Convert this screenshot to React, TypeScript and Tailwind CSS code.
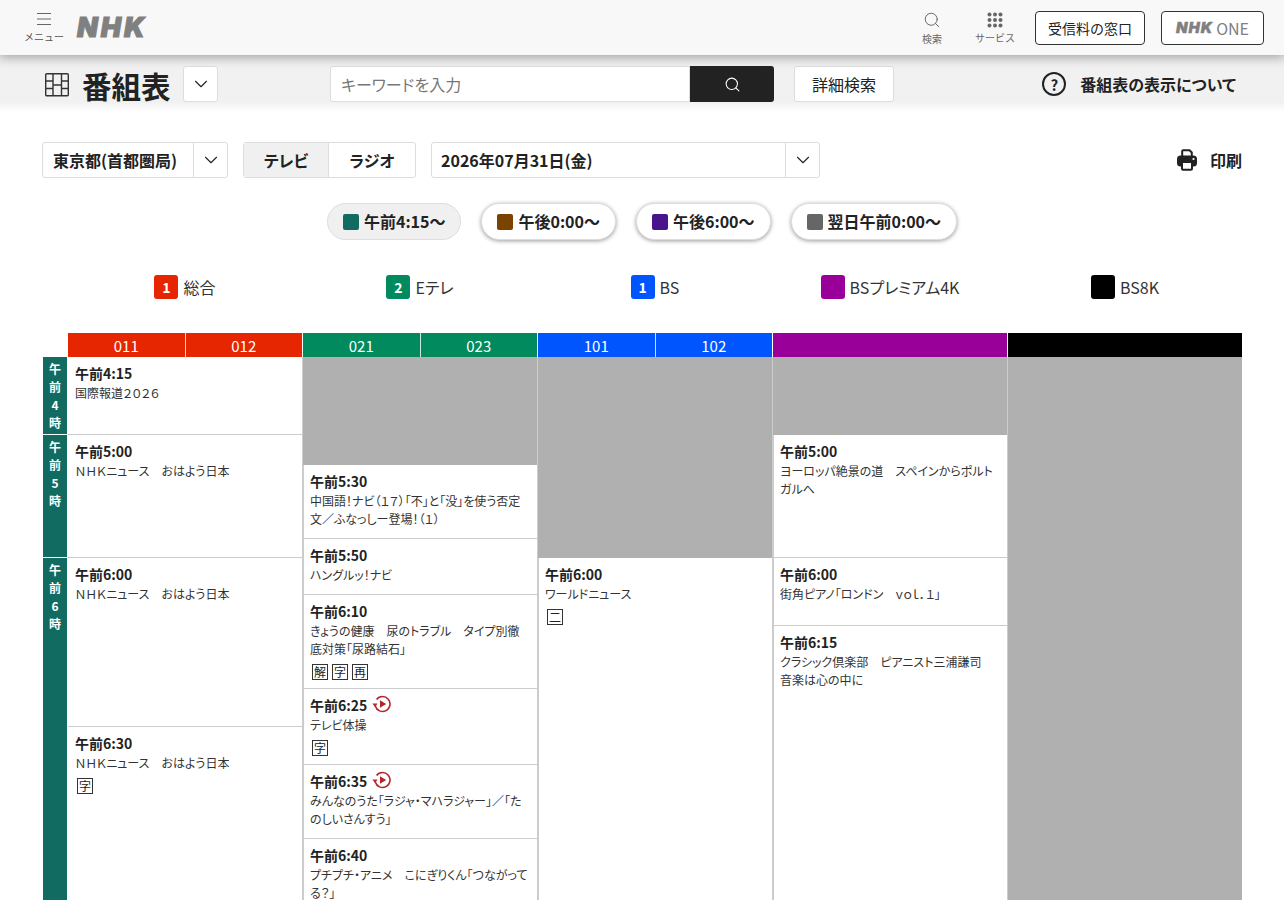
import { ChevronDown, Search } from "lucide-react";
import { ReactNode } from "react";

const FONT = "font-['Noto_Sans_CJK_JP','Noto_Sans',sans-serif]";

type Program = {
  h: string;
  time?: string;
  title?: string;
  badges?: string[];
  replay?: boolean;
};

const columns: Program[][] = [
  [
    { h: "h-[78px]", time: "午前4:15", title: "国際報道２０２６" },
    { h: "h-[123px]", time: "午前5:00", title: "ＮＨＫニュース　おはよう日本" },
    { h: "h-[169px]", time: "午前6:00", title: "ＮＨＫニュース　おはよう日本" },
    { h: "h-[220px]", time: "午前6:30", title: "ＮＨＫニュース　おはよう日本", badges: ["字"] },
  ],
  [
    { h: "h-[108px]" },
    { h: "h-[74px]", time: "午前5:30", title: "中国語！ナビ（１７）「不」と「没」を使う否定文／ふなっしー登場！（１）" },
    { h: "h-[56px]", time: "午前5:50", title: "ハングルッ！ナビ" },
    { h: "h-[94px]", time: "午前6:10", title: "きょうの健康　尿のトラブル　タイプ別徹底対策「尿路結石」", badges: ["解", "字", "再"] },
    { h: "h-[76px]", time: "午前6:25", title: "テレビ体操", badges: ["字"], replay: true },
    { h: "h-[74px]", time: "午前6:35", title: "みんなのうた「ラジャ・マハラジャー」／「たのしいさんすう」", replay: true },
    { h: "h-[110px]", time: "午前6:40", title: "プチプチ・アニメ　こにぎりくん「つながってる？」" },
  ],
  [
    { h: "h-[201px]" },
    { h: "h-[400px]", time: "午前6:00", title: "ワールドニュース", badges: ["二"] },
  ],
  [
    { h: "h-[78px]" },
    { h: "h-[123px]", time: "午前5:00", title: "ヨーロッパ絶景の道　スペインからポルトガルへ" },
    { h: "h-[68px]", time: "午前6:00", title: "街角ピアノ「ロンドン　ｖｏｌ．１」" },
    { h: "h-[340px]", time: "午前6:15", title: "クラシック倶楽部　ピアニスト三浦謙司　音楽は心の中に" },
  ],
  [{ h: "h-[600px]" }],
];

const ReplayIcon = () => (
  <svg width="20" height="18" viewBox="0 0 20 18" fill="none" className="ml-[5px] -mt-[3px]">
    <path d="M4.600 4.400A7.500 7.500 0 1 1 3.300 11" stroke="#b5262c" strokeWidth="1.600" />
    <path d="M0.400 8.600 L5.600 8.600 L3 12 Z" fill="#b5262c" />
    <path d="M8 5.200 L14.200 9 L8 12.800 Z" fill="#b5262c" />
  </svg>
);

const Badge = ({ children }: { children: ReactNode }) => (
  <span className="flex h-4 w-4 items-center justify-center border border-[#333] text-[12px] leading-none text-[#222]">
    {children}
  </span>
);

const ProgramCell = ({ program, inset }: { program: Program; inset: boolean }) => {
  if (!program.time) return <div className={`${program.h} bg-[#b0b0b0]`} />;
  return (
    <div
      className={`${program.h} border-b border-[#ccc] bg-white pr-[8px] pt-[5px] ${
        inset ? "border-l pl-[6px]" : "pl-[7px]"
      }`}
    >
      <div className="flex h-[22px] items-center text-[14px] font-bold text-[#222]">
        {program.time}
        {program.replay && <ReplayIcon />}
      </div>
      <p className="text-[12px] leading-[18px] text-[#333]">{program.title}</p>
      {program.badges && (
        <div className="mt-[6px] flex gap-1 pl-[2px]">
          {program.badges.map((b) => (
            <Badge key={b}>{b}</Badge>
          ))}
        </div>
      )}
    </div>
  );
};

const Chevron = () => <ChevronDown size={22} strokeWidth={1.200} className="text-[#222]" />;

const PeriodPill = ({ color, label, active }: { color: string; label: string; active?: boolean }) => (
  <div
    className={`flex h-[37px] items-center gap-[5px] rounded-full border border-[#ddd] px-[15px] text-[16px] font-bold text-[#222] ${
      active ? "bg-[#f0f0f0]" : "bg-white shadow-[0_1px_4px_rgba(0,0,0,0.4)]"
    }`}
  >
    <span className={`h-4 w-4 rounded-[2px] ${color}`} />
    <span className="mb-[2px]">{label}</span>
  </div>
);

const Legend = ({ color, num, label }: { color: string; num?: string; label: string }) => (
  <div className="flex items-center justify-center gap-[5px] text-[16px] text-[#333]">
    <span className={`flex h-6 w-6 items-center justify-center rounded-[3px] text-[14px] font-bold text-white ${color}`}>
      {num}
    </span>
    {label}
  </div>
);

const ChannelHead = ({ color, nums }: { color: string; nums: string[] }) => (
  <div className={`flex h-6 ${color}`}>
    {nums.map((n, i) => (
      <span
        key={n}
        className={`flex flex-1 items-center justify-center text-[15px] leading-none text-white ${i > 0 ? "border-l border-white/80" : ""}`}
      >
        {n}
      </span>
    ))}
  </div>
);

const HourCell = ({ h, chars }: { h: string; chars: string[] }) => (
  <div className={`${h} flex flex-col items-center border-b border-white bg-[#126b61] pt-[3px] text-[12px] font-bold leading-[18px] text-white`}>
    {chars.map((c, i) => (
      <span key={i}>{c}</span>
    ))}
  </div>
);

export default function App() {
  return (
    <div className={`${FONT} relative h-screen overflow-hidden bg-white text-[#222] [font-feature-settings:"palt"]`}>
      {/* site header */}
      <header className="relative z-10 flex h-[55px] items-center bg-[#f8f8f8] pl-6 pr-5 shadow-[0_2px_10px_rgba(0,0,0,0.3)] [font-feature-settings:normal]">
        <div className="flex w-10 flex-col items-center text-[#555]">
          <svg width="14" height="14" viewBox="0 0 14 14" stroke="#666" strokeWidth="1.200">
            <path d="M0 1.500H14M0 7H14M0 12.500H14" />
          </svg>
          <span className="mt-[5px] whitespace-nowrap text-[10px] leading-[12px] text-[#555]">メニュー</span>
        </div>
        <span className="ml-[13px] font-['Inter'] text-[27px] font-black italic leading-none tracking-[3px] text-[#808080] [-webkit-text-stroke:1px_#808080]">
          NHK
        </span>
        <div className="ml-auto flex items-center">
          <div className="flex w-[36px] flex-col items-center text-[#666]">
            <Search size={18} strokeWidth={1.300} />
            <span className="mt-[4px] text-[10px] leading-[12px]">検索</span>
          </div>
          <div className="ml-[25px] flex w-[40px] flex-col items-center text-[#666]">
            <svg width="16" height="16" viewBox="0 0 16 16" fill="#666">
              <circle cx="2.500" cy="2.500" r="2" />
              <circle cx="8" cy="2.500" r="2" />
              <circle cx="13.500" cy="2.500" r="2" />
              <circle cx="2.500" cy="8" r="2" />
              <circle cx="8" cy="8" r="2" />
              <circle cx="13.500" cy="8" r="2" />
              <circle cx="2.500" cy="13.500" r="2" />
              <circle cx="8" cy="13.500" r="2" />
              <circle cx="13.500" cy="13.500" r="2" />
            </svg>
            <span className="mt-[4px] whitespace-nowrap text-[10px] leading-[12px]">サービス</span>
          </div>
          <div className="ml-5 flex h-[34px] w-[110px] items-center justify-center rounded-[4px] border border-[#333] bg-white pt-[1px] text-[14px] text-[#222]">
            受信料の窓口
          </div>
          <div className="ml-4 flex h-[34px] w-[103px] items-center justify-center gap-[3px] rounded-[4px] border border-[#333] bg-white text-[16px] text-[#808080]">
            <span className="font-['Inter'] text-[15px] font-black italic leading-none tracking-[1px] [-webkit-text-stroke:0.4px_#808080]">
              NHK
            </span>
            ONE
          </div>
        </div>
      </header>

      {/* title band */}
      <div className="flex h-[57px] items-start bg-[linear-gradient(#e8e8e8_0,#f1f1f1_14px,#f1f1f1_47px,#fff_57px)] pl-[45px] pr-[48px] pt-[11px]">
        <svg width="24" height="24" viewBox="0 0 24 24" fill="none" stroke="#333" strokeWidth="1.400" className="mt-[7px] shrink-0">
          <rect x="0.700" y="0.700" width="22.600" height="22.100" rx="1" />
          <path d="M8 0.700V22.800M16.500 0.700V22.800M0.700 8H8M16.500 8H23.300M0.700 15.500H8M16.500 15.500H23.300M8 12H16.500" />
        </svg>
        <h1 className="ml-[13px] w-[89px] whitespace-nowrap text-[29.500px] font-bold leading-[38px]">番組表</h1>
        <div className="ml-3 flex h-9 w-[35px] items-center justify-center rounded-[3px] border border-[#ddd] bg-white">
          <Chevron />
        </div>
        <div className="ml-28 flex h-9 w-[360px] items-center rounded-l-[3px] border border-[#ddd] bg-white pl-[10px] text-[16px] text-[#777]">
          キーワードを入力
        </div>
        <div className="flex h-9 w-[84px] items-center justify-center rounded-r-[3px] bg-[#222] text-white">
          <Search size={17} strokeWidth={1.500} />
        </div>
        <div className="ml-5 flex h-9 w-[100px] items-center justify-center rounded-[3px] border border-[#ddd] bg-white text-[16px]">
          詳細検索
        </div>
        <div className="ml-auto mt-[6px] flex items-center gap-[14px] text-[16px] font-bold">
          <span className="flex h-6 w-6 items-center justify-center rounded-full border-2 border-[#222] text-[15px] leading-none">?</span>
          番組表の表示について
        </div>
      </div>

      {/* area, media and date selectors */}
      <div className="mt-[30px] flex h-9 items-stretch pl-[42px] pr-[42px] text-[16px] font-bold">
        <div className="flex w-[186px] items-center rounded-[3px] border border-[#ddd]">
          <span className="w-[150px] pl-[10px]">東京都(首都圏局)</span>
          <span className="flex h-full flex-1 items-center justify-center border-l border-[#ddd]">
            <Chevron />
          </span>
        </div>
        <div className="ml-[15px] flex w-[173px] rounded-[3px] border border-[#ddd]">
          <span className="flex w-[84px] items-center justify-center bg-[#f0f0f0]">テレビ</span>
          <span className="flex flex-1 items-center justify-center border-l border-[#ddd]">ラジオ</span>
        </div>
        <div className="ml-[15px] flex w-[389px] items-center rounded-[3px] border border-[#ddd]">
          <span className="w-[353px] pl-[9px]">2026年07月31日(金)</span>
          <span className="flex h-full flex-1 items-center justify-center border-l border-[#ddd]">
            <Chevron />
          </span>
        </div>
        <div className="ml-auto flex items-center gap-[13px]">
          <svg width="20" height="22" viewBox="0 0 20 22" fill="none">
            <path d="M5.200 8V2.200a1 1 0 0 1 1-1h6.300l2.300 2.300V8" stroke="#222" strokeWidth="2" />
            <rect y="6.500" width="20" height="11" rx="3.500" fill="#222" />
            <rect x="5" y="13" width="10" height="7.800" rx="1" fill="#fff" stroke="#222" strokeWidth="2" />
            <circle cx="16.500" cy="10" r="1.100" fill="#fff" />
          </svg>
          印刷
        </div>
      </div>

      {/* time of day shortcuts */}
      <div className="mt-[25px] flex justify-center gap-5">
        <PeriodPill active color="bg-[#126b61]" label="午前4:15〜" />
        <PeriodPill color="bg-[#7a4300]" label="午後0:00〜" />
        <PeriodPill color="bg-[#4a148c]" label="午後6:00〜" />
        <PeriodPill color="bg-[#666666]" label="翌日午前0:00〜" />
      </div>

      {/* channel legend */}
      <div className="ml-[68px] mt-[35px] grid h-6 w-[1174px] grid-cols-5 gap-px">
        <Legend color="bg-[#e62600]" num="1" label="総合" />
        <Legend color="bg-[#008a5e]" num="2" label="Eテレ" />
        <Legend color="bg-[#0055ff]" num="1" label="BS" />
        <Legend color="bg-[#990099]" label="BSプレミアム4K" />
        <Legend color="bg-black" label="BS8K" />
      </div>

      {/* programme table */}
      <div className="ml-[68px] mt-[34px] grid w-[1174px] grid-cols-5 gap-px">
        <ChannelHead color="bg-[#e62600]" nums={["011", "012"]} />
        <ChannelHead color="bg-[#008a5e]" nums={["021", "023"]} />
        <ChannelHead color="bg-[#0055ff]" nums={["101", "102"]} />
        <ChannelHead color="bg-[#990099]" nums={[]} />
        <ChannelHead color="bg-black" nums={[]} />
      </div>
      <div className="ml-[43px] flex w-[1199px]">
        <div className="w-[24px] shrink-0">
          <HourCell h="h-[78px]" chars={["午", "前", "4", "時"]} />
          <HourCell h="h-[123px]" chars={["午", "前", "5", "時"]} />
          <HourCell h="h-[400px]" chars={["午", "前", "6", "時"]} />
        </div>
        <div className="ml-px grid flex-1 grid-cols-5 gap-px bg-[#cccccc]">
          {columns.map((col, i) => (
            <div key={i} className="flex flex-col">
              {col.map((p, j) => (
                <ProgramCell key={j} program={p} inset={i > 0} />
              ))}
            </div>
          ))}
        </div>
      </div>
    </div>
  );
}
